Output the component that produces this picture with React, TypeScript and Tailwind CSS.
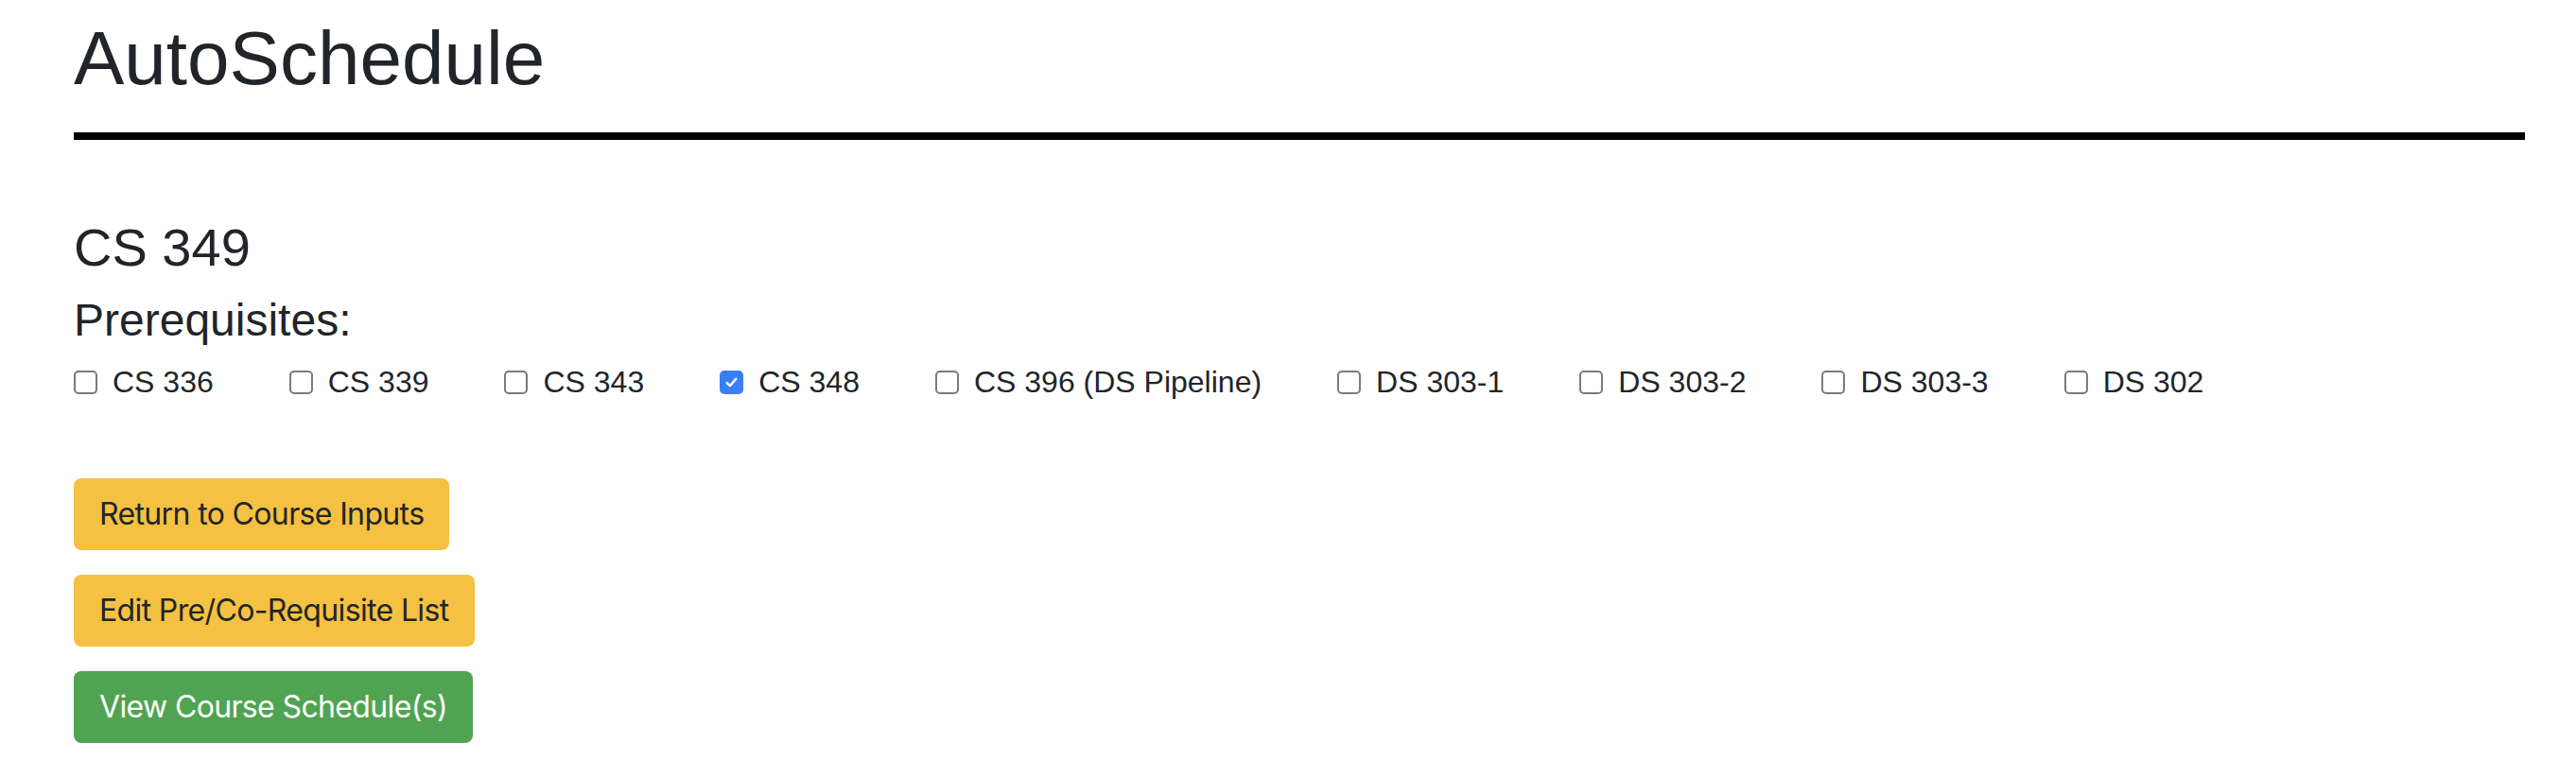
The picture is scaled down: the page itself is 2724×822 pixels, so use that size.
const prereqs = [
  { label: "CS 336", checked: false },
  { label: "CS 339", checked: false },
  { label: "CS 343", checked: false },
  { label: "CS 348", checked: true },
  { label: "CS 396 (DS Pipeline)", checked: false },
  { label: "DS 303-1", checked: false },
  { label: "DS 303-2", checked: false },
  { label: "DS 303-3", checked: false },
  { label: "DS 302", checked: false },
];

function CheckBox({ checked }: { checked: boolean }) {
  if (checked) {
    return (
      <span className="flex h-[25px] w-[25px] shrink-0 items-center justify-center rounded-[5px] bg-[#3a7ef6]">
        <svg viewBox="0 0 16 16" className="h-[17px] w-[17px]" fill="none">
          <path d="M3.5 8.5l3 3 6-7" stroke="#fff" strokeWidth="2.4" strokeLinecap="round" strokeLinejoin="round" />
        </svg>
      </span>
    );
  }
  return <span className="h-[25px] w-[25px] shrink-0 rounded-[5px] border-2 border-[#7a7a7a] bg-white" />;
}

function ActionButton({ label, tone }: { label: string; tone: "warning" | "success" }) {
  const toneClass =
    tone === "warning" ? "bg-[#f5c142] text-[#212529]" : "bg-[#50a451] text-white";
  return (
    <button
      type="button"
      className={`w-fit rounded-[8px] border-2 border-transparent px-[25px] py-[12px] text-[32px] leading-[48px] font-['Inter',sans-serif] tracking-[-0.02em] ${toneClass}`}
    >
      {label}
    </button>
  );
}

export default function App() {
  return (
    <div className="min-h-[822px] bg-white pl-[78px] pr-[54px] text-[#212529] font-['Liberation_Sans',Arial,sans-serif]">
      <h1 className="pt-[14px] text-[80px] leading-[96px]">AutoSchedule</h1>
      <hr className="mt-[30px] h-[8px] border-0 bg-black" />

      <h3 className="mt-[80px] text-[56px] leading-[67px]">CS 349</h3>
      <h4 className="mt-[15px] text-[48px] leading-[58px]">Prerequisites:</h4>

      <div className="mt-[12px] flex items-center gap-x-[80px]">
        {prereqs.map((p) => (
          <label key={p.label} className="flex items-center gap-[16px] text-[32px] leading-[48px]">
            <CheckBox checked={p.checked} />
            <span>{p.label}</span>
          </label>
        ))}
      </div>

      <div className="mt-[78px] flex flex-col gap-[26px]">
        <ActionButton label="Return to Course Inputs" tone="warning" />
        <ActionButton label="Edit Pre/Co-Requisite List" tone="warning" />
        <ActionButton label="View Course Schedule(s)" tone="success" />
      </div>
    </div>
  );
}
